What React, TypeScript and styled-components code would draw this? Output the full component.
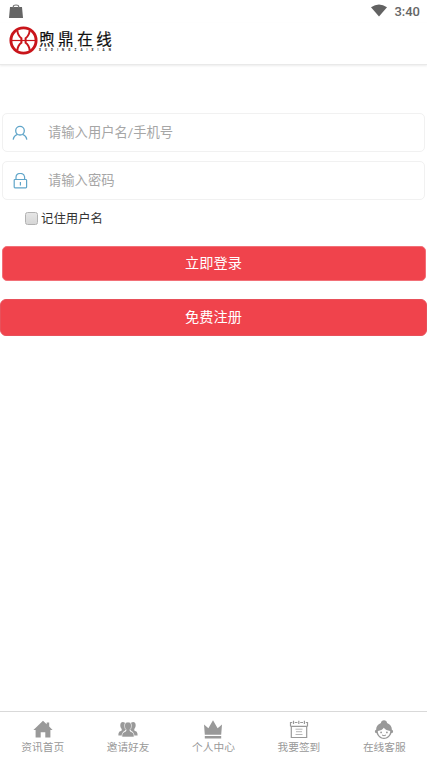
import React from 'react';
import styled, { createGlobalStyle } from 'styled-components';

const GlobalStyle = createGlobalStyle`
  * { box-sizing: border-box; }
  body { margin: 0; background: #fff; }
  button, input { font-family: inherit; }
`;

const Screen = styled.div`
  display: flex;
  flex-direction: column;
  height: 759px;
  overflow: hidden;
  background: #fff;
  font-family: Roboto, 'Noto Sans CJK SC', sans-serif;
`;

const StatusBar = styled.div`
  display: flex;
  align-items: center;
  height: 23px;
  padding: 0 7px 0 9px;
  color: #666;
`;

const BagIcon = styled.svg`
  display: block;
  margin-bottom: 4px;
`;

const WifiIcon = styled.svg`
  display: block;
  margin-bottom: 3px;
`;

const Clock = styled.span`
  margin-left: 7px;
  font-size: 13px;
  font-weight: 500;
  line-height: 23px;
`;

const Spacer = styled.div`
  flex: 1;
`;

const Header = styled.header`
  display: flex;
  height: 42px;
  padding: 3px 9px 0;
  border-bottom: 1px solid #e9e9e9;
  box-shadow: 0 1px 2px rgba(0, 0, 0, 0.08);
`;

const Brand = styled.div`
  display: flex;
  flex-direction: column;
  margin: 6px 0 0 1px;
  color: #111;
`;

const BrandName = styled.span`
  font-size: 15.5px;
  font-weight: 400;
  line-height: 17px;
  letter-spacing: 3.6px;
  -webkit-text-stroke: 0.2px #111;
`;

const BrandLatin = styled.span`
  height: 5px;
  font-size: 3px;
  font-weight: 700;
  line-height: 3px;
  letter-spacing: 4.1px;
  white-space: nowrap;
`;

const Form = styled.main`
  display: flex;
  flex: 1;
  flex-direction: column;
  padding-top: 48px;
`;

const Field = styled.label`
  display: flex;
  align-items: center;
  height: 39px;
  margin: 0 2px 9px;
  padding-left: 9px;
  border: 1px solid #f1f1f1;
  border-radius: 5px;
`;

const Input = styled.input`
  flex: 1;
  min-width: 0;
  margin: 0 0 0 20px;
  padding: 0;
  border: 0;
  outline: 0;
  background: transparent;
  font-size: 13.3px;
  color: #444;
  &::placeholder { color: #a6a6a6; opacity: 1; }
`;

const Remember = styled.label`
  display: flex;
  align-items: center;
  height: 20px;
  margin: -1px 0 18px 25px;
  font-size: 12.4px;
  color: #333;
`;

const Checkbox = styled.input`
  appearance: none;
  width: 13px;
  height: 13px;
  margin: 1px 3px 0 0;
  border: 1px solid #b2b2b2;
  border-radius: 2.5px;
  background: linear-gradient(#e6e6e6, #d6d6d6);
`;

const Button = styled.button<{ $wide?: boolean }>`
  flex: none;
  height: ${(p) => (p.$wide ? 37 : 35)}px;
  margin: ${(p) => (p.$wide ? '0' : '0 1.5px 18px')};
  padding: 0 0 1px;
  border: 1px solid ${(p) => (p.$wide ? '#e8505a' : '#f27078')};
  border-radius: ${(p) => (p.$wide ? 6 : 5)}px;
  background: #f0434c;
  color: #fff;
  font-size: 14.2px;
  line-height: 30px;
`;

const Nav = styled.nav`
  display: grid;
  grid-template-columns: repeat(5, 1fr);
  height: 48px;
  border-top: 1px solid #d9d9d9;
`;

const NavItem = styled.a`
  display: flex;
  flex-direction: column;
  align-items: center;
  padding-top: 8px;
  color: #999;
  font-size: 10.7px;
  line-height: 15px;
`;

const NavIcon = styled.svg`
  display: block;
  width: 20px;
  height: 20px;
  fill: currentColor;
`;

const Emblem = () => (
  <svg width="29" height="29" viewBox="0 0 29 29" fill="none" stroke="#c9151b">
    <circle cx="14.5" cy="14.5" r="12.6" strokeWidth="2.9" />
    <path d="M8.3 4.5 C8.7 8.5 10.2 10.6 12.4 12.2 V16.8 C10.2 18.4 8.7 20.5 8.3 24.5 M20.7 4.5 C20.3 8.5 18.8 10.6 16.6 12.2 V16.8 C18.8 18.4 20.3 20.5 20.7 24.5" strokeWidth="2" />
    <path d="M3 14.5 H26" strokeWidth="1.2" />
  </svg>
);

const NAV = [
  {
    label: '资讯首页',
    icon: (
      <path d="M10 .8 L13.7 4.2 V2.6 H16.2 V6.5 L19.6 10 H17.4 V17.5 H12.3 V12.2 H7.7 V17.5 H2.6 V10 H.4 Z" />
    ),
  },
  {
    label: '邀请好友',
    icon: (
      <>
        <path d="M4.8 2 C6.3 2 7.2 2.8 7.4 4 C7 6.6 7.4 8.2 8.4 9.6 L4.8 12.2 L4.4 15.4 H.4 C.5 11.8 1.3 11.5 3.7 10.4 V9 C1.5 6.7 1.9 2 4.8 2 Z" />
        <path d="M15.2 2 C13.7 2 12.8 2.8 12.6 4 C13 6.6 12.6 8.2 11.6 9.6 L15.2 12.2 L15.6 15.4 H19.6 C19.5 11.8 18.7 11.5 16.3 10.4 V9 C18.5 6.7 18.1 2 15.2 2 Z" />
        <path d="M10 2.1 C14.6 2.1 14 7.6 12 9.6 V11 C14.9 12.5 16 12.7 16.1 17 H3.9 C4 12.7 5.1 12.5 8 11 V9.6 C6 7.6 5.4 2.1 10 2.1 Z" stroke="#fff" strokeWidth=".6" />
      </>
    ),
  },
  {
    label: '个人中心',
    icon: (
      <path d="M1 4.4 L5.4 8.2 L10 .2 L14.6 8.2 L19 4.4 L18.2 14.8 H1.8 Z M1.8 16 H18.2 V18.4 H1.8 Z" />
    ),
  },
  {
    label: '我要签到',
    icon: (
      <g fill="none" stroke="currentColor">
        <path d="M1.5 6.3 V2.5 H3.2 M5.8 2.5 H8.4 M11.2 2.5 H14 M16.8 2.5 H18.5 V6.3 M1.5 6.3 H18.5 M4.5 .8 V4 M9.8 .8 V4 M15.4 .8 V4" strokeWidth="1.2" />
        <path d="M2.3 6.5 V17.5 H17.7 V6.5" strokeWidth="1.2" />
        <path d="M6.5 9.2 H13.5 M7 11.7 H13 M6.5 14.5 H13.5" strokeWidth="1" opacity=".7" />
      </g>
    ),
  },
  {
    label: '在线客服',
    icon: (
      <>
        <path d="M7 3 C6.7 -.7 13.3 -.7 13 3 C16.8 4.4 18 7.1 17.8 9.8 C19.8 10.4 19.3 13 17.5 13.1 C16.5 16.5 13.5 19 10 19 C6.5 19 3.5 16.5 2.5 13.1 C.7 13 .2 10.4 2.2 9.8 C2 7.1 3.2 4.4 7 3 Z" />
        <path d="M3.8 11 C6.6 10.7 8.6 9.5 9.8 7.8 C11.2 9.6 13.5 10.8 16.2 11 C16.3 14.7 13.6 17.8 10 17.8 C6.4 17.8 3.7 14.7 3.8 11 Z" fill="#fff" />
        <circle cx="7.1" cy="12.4" r=".9" />
        <circle cx="12.9" cy="12.4" r=".9" />
        <path d="M8 15 Q10 16.5 12 15" fill="none" stroke="currentColor" />
      </>
    ),
  },
];

export default function App() {
  return (
    <>
      <GlobalStyle />
      <Screen>
        <StatusBar>
          <BagIcon width="14" height="17" viewBox="0 0 14 17">
            <path d="M1 6 H13 L14 17 H0 Z" fill="#656565" />
            <path d="M4.3 7 V5.5 Q4.3 4 7 4 Q9.7 4 9.7 5.5 V7" fill="none" stroke="#777" strokeWidth="1.2" />
          </BagIcon>
          <Spacer />
          <WifiIcon width="16" height="13" viewBox="0 0 16 13">
            <path d="M0 3.3 Q8 -2.3 16 3.3 L8 12.5 Z" fill="#626262" />
          </WifiIcon>
          <Clock>3:40</Clock>
        </StatusBar>
        <Header>
          <Emblem />
          <Brand>
            <BrandName>煦鼎在线</BrandName>
            <BrandLatin>XUDINGZAIXIAN</BrandLatin>
          </Brand>
        </Header>
        <Form>
          <Field>
            <svg width="16" height="16" viewBox="0 0 16 16" fill="none" stroke="#60a5c9" strokeWidth="1.3">
              <circle cx="8" cy="5.7" r="4.3" />
              <path d="M1.2 14.7 C1.6 11.5 3.2 10.2 5.5 9.4 M14.8 14.7 C14.4 11.5 12.8 10.2 10.5 9.4" />
            </svg>
            <Input type="text" placeholder="请输入用户名/手机号" />
          </Field>
          <Field>
            <svg width="16" height="16" viewBox="0 0 16 16" fill="none" stroke="#60a5c9" strokeWidth="1.2">
              <rect x="2.2" y="6.5" width="12.4" height="8.4" rx=".8" />
              <path d="M4 6.5 V4.5 C4 -.6 11.8 -1 12.6 3.9 V6.5 M8.4 9.1 V12.5" />
            </svg>
            <Input type="password" placeholder="请输入密码" />
          </Field>
          <Remember>
            <Checkbox type="checkbox" />
            记住用户名
          </Remember>
          <Button type="button">立即登录</Button>
          <Button type="button" $wide>免费注册</Button>
        </Form>
        <Nav>
          {NAV.map((item) => (
            <NavItem key={item.label}>
              <NavIcon viewBox="0 0 20 20">{item.icon}</NavIcon>
              {item.label}
            </NavItem>
          ))}
        </Nav>
      </Screen>
    </>
  );
}
